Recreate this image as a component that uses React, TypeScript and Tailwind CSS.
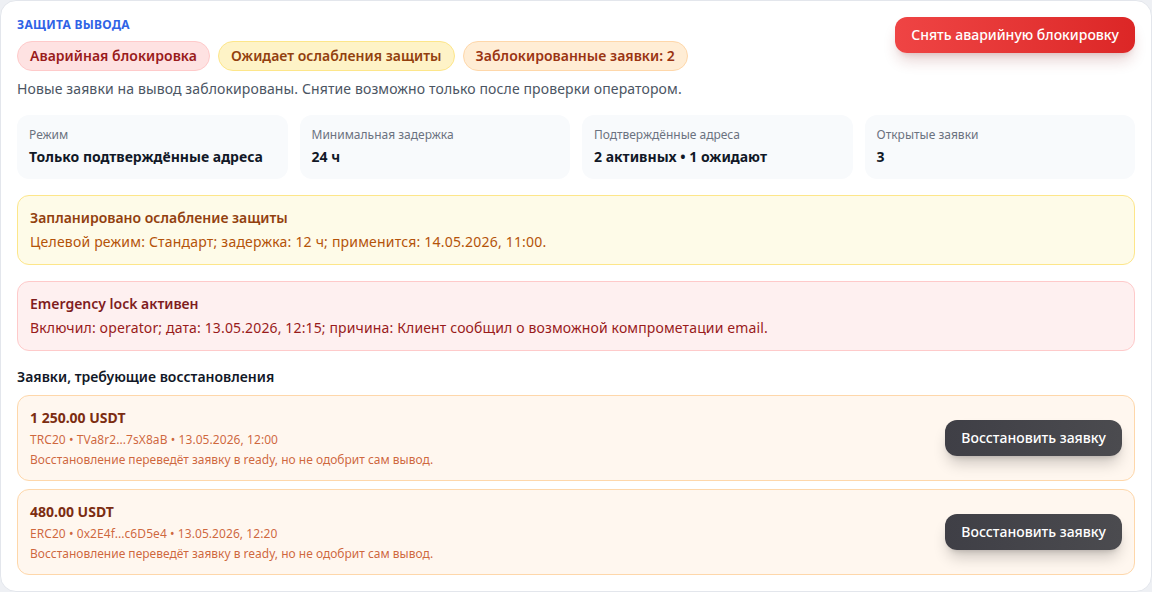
import React from "react";

const stats = [
  { label: "Режим", value: "Только подтверждённые адреса" },
  { label: "Минимальная задержка", value: "24 ч" },
  { label: "Подтверждённые адреса", value: "2 активных • 1 ожидают" },
  { label: "Открытые заявки", value: "3" },
];

const requests = [
  {
    amount: "1 250.00 USDT",
    meta: "TRC20 • TVa8r2...7sX8aB • 13.05.2026, 12:00",
  },
  {
    amount: "480.00 USDT",
    meta: "ERC20 • 0x2E4f...c6D5e4 • 13.05.2026, 12:20",
  },
];

export default function App(): JSX.Element {
  return (
    <div
      className="min-h-screen bg-[#eef0f4]"
      style={{ fontFamily: '"Noto Sans", "Open Sans", sans-serif' }}
    >
      <div className="rounded-2xl border border-[#e3e6ec] bg-white p-4">
        {/* header */}
        <div className="flex items-start justify-between">
          <div>
            <div className="text-xs font-bold uppercase leading-4 tracking-wide text-[#2f63e6]">
              Защита вывода
            </div>
            <div className="mt-2 flex gap-2">
              <span className="rounded-full border border-[#fecaca] bg-[#fee2e2] px-3 py-1 text-sm font-semibold tracking-[0.03px] text-[#991b1b]">
                Аварийная блокировка
              </span>
              <span className="rounded-full border border-[#fde68a] bg-[#fef3c7] px-3 py-1 text-sm font-semibold tracking-[0.03px] text-[#92400e]">
                Ожидает ослабления защиты
              </span>
              <span className="rounded-full border border-[#fed7aa] bg-[#ffedd5] px-3 py-1 text-sm font-semibold tracking-[0.03px] text-[#9a3412]">
                Заблокированные заявки: 2
              </span>
            </div>
            <p className="mt-2 text-sm tracking-[0.12px] text-[#4b5563]">
              Новые заявки на вывод заблокированы. Снятие возможно только после проверки оператором.
            </p>
          </div>
          <button className="rounded-xl bg-gradient-to-r from-[#ef4444] to-[#dc2626] px-4 py-2 text-sm font-medium text-white shadow-lg shadow-red-900/20">
            Снять аварийную блокировку
          </button>
        </div>

        {/* stats */}
        <div className="mt-4 grid grid-cols-4 gap-3">
          {stats.map((s) => (
            <div key={s.label} className="rounded-xl bg-[#f8fafc] p-3">
              <div className="text-xs leading-4 text-[#6b7280]">{s.label}</div>
              <div className="mt-1 text-sm font-bold text-[#111827]">{s.value}</div>
            </div>
          ))}
        </div>

        {/* notices */}
        <div className="mt-4 rounded-xl border border-[#fde68a] bg-[#fefbe8] p-3">
          <div className="text-sm font-semibold text-[#92400e]">Запланировано ослабление защиты</div>
          <div className="mt-1 text-sm tracking-[0.2px] text-[#b45309]">
            Целевой режим: Стандарт; задержка: 12 ч; применится: 14.05.2026, 11:00.
          </div>
        </div>

        <div className="mt-4 rounded-xl border border-[#fecaca] bg-[#fef0f0] p-3">
          <div className="text-sm font-semibold text-[#7f1d1d]">Emergency lock активен</div>
          <div className="mt-1 text-sm tracking-[0.14px] text-[#991b1b]">
            Включил: operator; дата: 13.05.2026, 12:15; причина: Клиент сообщил о возможной компрометации email.
          </div>
        </div>

        {/* requests */}
        <div className="mt-4 text-sm font-semibold text-[#111827]">Заявки, требующие восстановления</div>
        <div className="mt-2 flex flex-col gap-2">
          {requests.map((r) => (
            <div
              key={r.amount}
              className="flex items-center justify-between rounded-xl border border-[#fed7aa] bg-[#fff7ef] p-3"
            >
              <div>
                <div className="text-sm font-bold text-[#7c2d12]">{r.amount}</div>
                <div className="mt-1 text-xs leading-4 tracking-[0.07px] text-[#c2410c]/80">{r.meta}</div>
                <div className="mt-1 text-xs leading-4 text-[#c2410c]/80">
                  Восстановление переведёт заявку в ready, но не одобрит сам вывод.
                </div>
              </div>
              <button className="rounded-xl bg-gradient-to-r from-[#3f3f46] to-[#4b4b4f] px-4 py-2 text-sm font-medium text-white shadow-lg shadow-black/20">
                Восстановить заявку
              </button>
            </div>
          ))}
        </div>
      </div>
    </div>
  );
}
